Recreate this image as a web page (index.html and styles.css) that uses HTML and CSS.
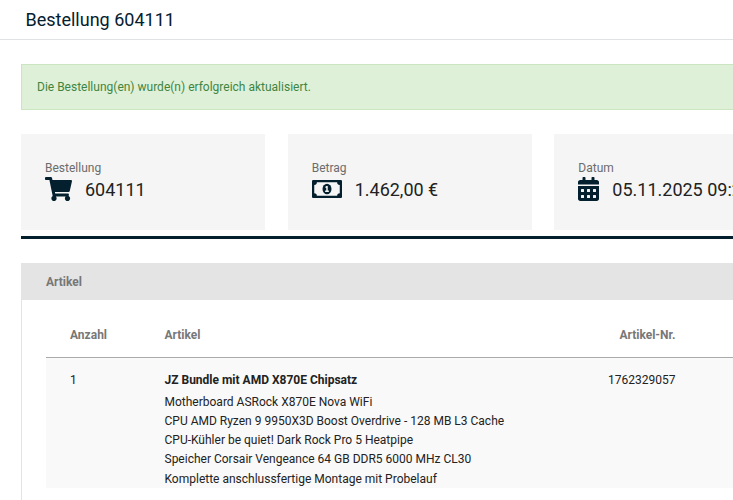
FILE: index.html
```html
<!DOCTYPE html>
<html lang="de">
<head>
<meta charset="utf-8">
<title>Bestellung 604111</title>
<link rel="stylesheet" href="styles.css">
</head>
<body>
<header class="page-head"><h1>Bestellung 604111</h1></header>
<main class="content">
  <div class="alert">Die Bestellung(en) wurde(n) erfolgreich aktualisiert.</div>
  <section class="cards">
    <div class="card">
      <div class="card-label">Bestellung</div>
      <div class="card-row">
        <svg width="27" height="24" viewBox="0 0 576 512"><path d="M528.12 301.319l47.273-208C578.806 78.301 567.391 64 551.99 64H159.208l-9.166-44.81C147.758 8.021 137.93 0 126.529 0H24C10.745 0 0 10.745 0 24v16c0 13.255 10.745 24 24 24h69.883l70.248 343.435C147.325 417.1 136 435.222 136 456c0 30.928 25.072 56 56 56s56-25.072 56-56c0-15.674-6.447-29.835-16.824-40h209.647C430.447 426.165 424 440.326 424 456c0 30.928 25.072 56 56 56s56-25.072 56-56c0-22.172-12.888-41.332-31.579-50.405l5.517-24.276c3.413-15.018-8.002-29.319-23.403-29.319H218.117l-6.545-32h293.145c11.206 0 20.92-7.754 23.403-18.681z"/></svg>
        <span class="card-value">604111</span>
      </div>
    </div>
    <div class="card">
      <div class="card-label">Betrag</div>
      <div class="card-row">
        <svg width="30" height="24" viewBox="0 0 640 512"><path fill-rule="evenodd" d="M24 64H616Q640 64 640 88V424Q640 448 616 448H24Q0 448 0 424V88Q0 64 24 64ZM104 112A56 56 0 0 1 48 168V344A56 56 0 0 1 104 400H536A56 56 0 0 1 592 344V168A56 56 0 0 1 536 112Z"/><ellipse cx="320" cy="256" rx="96" ry="112"/><path class="icon-cut" d="M352 288h-16v-88c0-4.42-3.58-8-8-8h-13.58c-4.74 0-9.37 1.4-13.31 4.03l-15.33 10.22a8 8 0 0 0-2.22 11.09l8.88 13.31a8 8 0 0 0 11.09 2.22l.47-.31V288h-16c-4.42 0-8 3.58-8 8v16c0 4.42 3.58 8 8 8h64c4.42 0 8-3.58 8-8v-16c0-4.42-3.58-8-8-8z"/></svg>
        <span class="card-value">1.462,00 €</span>
      </div>
    </div>
    <div class="card">
      <div class="card-label">Datum</div>
      <div class="card-row">
        <svg width="21" height="24" viewBox="0 0 448 512"><path d="M0 464c0 26.500 21.500 48 48 48h352c26.500 0 48-21.500 48-48V192H0v272zm320-196c0-6.600 5.400-12 12-12h40c6.600 0 12 5.400 12 12v40c0 6.600-5.400 12-12 12h-40c-6.600 0-12-5.400-12-12v-40zm0 128c0-6.600 5.400-12 12-12h40c6.600 0 12 5.400 12 12v40c0 6.600-5.400 12-12 12h-40c-6.600 0-12-5.400-12-12v-40zM192 268c0-6.600 5.400-12 12-12h40c6.600 0 12 5.400 12 12v40c0 6.600-5.400 12-12 12h-40c-6.600 0-12-5.400-12-12v-40zm0 128c0-6.600 5.400-12 12-12h40c6.600 0 12 5.400 12 12v40c0 6.600-5.400 12-12 12h-40c-6.600 0-12-5.400-12-12v-40zM64 268c0-6.600 5.400-12 12-12h40c6.600 0 12 5.400 12 12v40c0 6.600-5.400 12-12 12H76c-6.600 0-12-5.400-12-12v-40zm0 128c0-6.600 5.400-12 12-12h40c6.600 0 12 5.400 12 12v40c0 6.600-5.400 12-12 12H76c-6.600 0-12-5.400-12-12v-40zM400 64h-48V16c0-8.800-7.200-16-16-16h-32c-8.800 0-16 7.200-16 16v48H160V16c0-8.800-7.200-16-16-16h-32c-8.800 0-16 7.200-16 16v48H48C21.500 64 0 85.500 0 112v48h448v-48c0-26.500-21.500-48-48-48z"/></svg>
        <span class="card-value">05.11.2025 09:23</span>
      </div>
    </div>
  </section>
  <section class="panel">
    <h2>Artikel</h2>
    <div class="table">
      <div class="row head"><span>Anzahl</span><span>Artikel</span><span class="num">Artikel-Nr.</span></div>
      <div class="row item">
        <span>1</span>
        <div>
          <strong>JZ Bundle mit AMD X870E Chipsatz</strong>
          <ul>
            <li>Motherboard ASRock X870E Nova WiFi</li>
            <li>CPU AMD Ryzen 9 9950X3D Boost Overdrive - 128 MB L3 Cache</li>
            <li>CPU-Kühler be quiet! Dark Rock Pro 5 Heatpipe</li>
            <li>Speicher Corsair Vengeance 64 GB DDR5 6000 MHz CL30</li>
            <li>Komplette anschlussfertige Montage mit Probelauf</li>
          </ul>
        </div>
        <span class="num">1762329057</span>
      </div>
    </div>
  </section>
</main>
</body>
</html>
```
FILE: styles.css
```css
* { box-sizing: border-box; }
html, body { height: 100%; overflow: hidden; }
body { margin: 0; background: #fff; font: 12px/20px Roboto, sans-serif; color: #222; }
.page-head { height: 40px; padding-left: 25.500px; border-bottom: 1px solid #e0e3e4; }
h1 { margin: 0; font-size: 18px; line-height: 39px; font-weight: 400; color: #04202f; }
.content { width: 1100px; padding: 24px 0 0 21px; }
.alert { height: 46px; padding-left: 15px; border: 1px solid #cbe5c0; background: #dff0d8; color: #3f8541; line-height: 44px; }
.cards { display: flex; gap: 22.660px; height: 105px; margin-top: 24px; border-bottom: 3px solid #04202f; }
.card { flex: 0 0 244px; height: 96px; padding: 24px 0 0 24px; background: #f5f5f5; white-space: nowrap; }
.card-label { color: #6c6c6c; }
.card-row { display: flex; align-items: center; height: 24px; margin-top: -1px; gap: 13px; }
.card-row svg { flex: none; fill: #04202f; }
.card-row .icon-cut { fill: #f5f5f5; }
.card-value { padding-top: 2px; font-size: 18px; line-height: 24px; }
.panel { height: 400px; margin-top: 24px; border-left: 1px solid #e4e4e4; }
h2 { height: 37px; margin: 0; padding-left: 24px; background: #e4e4e4; color: #777; font-size: 12px; line-height: 38px; font-weight: 700; }
.table { padding: 12px 24px 0; }
.row { display: grid; grid-template-columns: 94.500px 340px 171px; padding-left: 24px; }
.head { height: 46px; border-bottom: 1px solid #aaa; line-height: 46px; color: #777; font-weight: 700; }
.item { height: 130px; padding-top: 12px; background: #f9f9f9; }
.num { text-align: right; }
strong { display: block; font-weight: 700; }
ul { list-style: none; margin: 2.750px 0 0; padding: 0; line-height: 19.200px; }
```
